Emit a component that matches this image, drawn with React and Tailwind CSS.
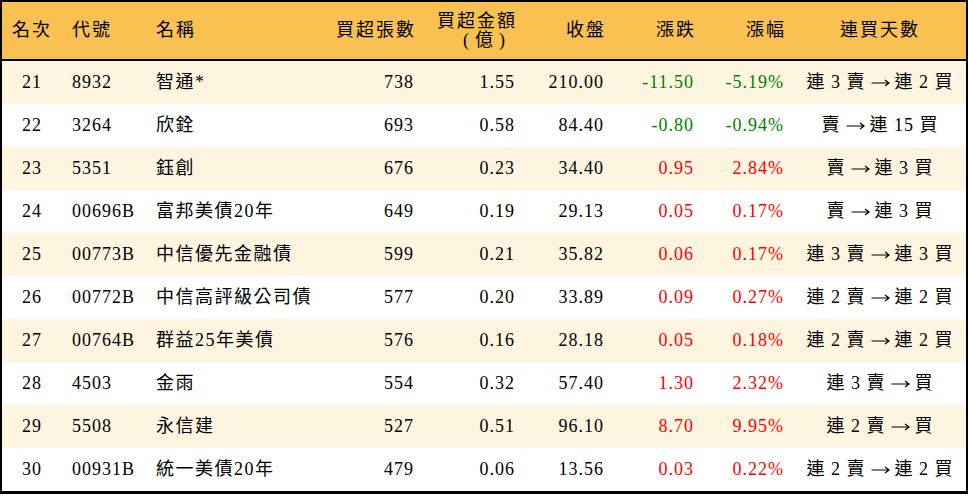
import React from 'react'

const rows = [
  { rank: 21, code: '8932', name: '智通*', vol: '738', amt: '1.55', close: '210.00', chg: '-11.50', pct: '-5.19%', from: '連 3 賣', to: '連 2 買' },
  { rank: 22, code: '3264', name: '欣銓', vol: '693', amt: '0.58', close: '84.40', chg: '-0.80', pct: '-0.94%', from: '賣', to: '連 15 買' },
  { rank: 23, code: '5351', name: '鈺創', vol: '676', amt: '0.23', close: '34.40', chg: '0.95', pct: '2.84%', from: '賣', to: '連 3 買' },
  { rank: 24, code: '00696B', name: '富邦美債20年', vol: '649', amt: '0.19', close: '29.13', chg: '0.05', pct: '0.17%', from: '賣', to: '連 3 買' },
  { rank: 25, code: '00773B', name: '中信優先金融債', vol: '599', amt: '0.21', close: '35.82', chg: '0.06', pct: '0.17%', from: '連 3 賣', to: '連 3 買' },
  { rank: 26, code: '00772B', name: '中信高評級公司債', vol: '577', amt: '0.20', close: '33.89', chg: '0.09', pct: '0.27%', from: '連 2 賣', to: '連 2 買' },
  { rank: 27, code: '00764B', name: '群益25年美債', vol: '576', amt: '0.16', close: '28.18', chg: '0.05', pct: '0.18%', from: '連 2 賣', to: '連 2 買' },
  { rank: 28, code: '4503', name: '金雨', vol: '554', amt: '0.32', close: '57.40', chg: '1.30', pct: '2.32%', from: '連 3 賣', to: '買' },
  { rank: 29, code: '5508', name: '永信建', vol: '527', amt: '0.51', close: '96.10', chg: '8.70', pct: '9.95%', from: '連 2 賣', to: '買' },
  { rank: 30, code: '00931B', name: '統一美債20年', vol: '479', amt: '0.06', close: '13.56', chg: '0.03', pct: '0.22%', from: '連 2 賣', to: '連 2 買' },
]

const cols = 'grid grid-cols-[60px_84px_178px_100px_101px_89px_90px_90px_172px]'

const Arrow = () => (
  <svg width="19" height="10" viewBox="0 0 19 10" className="inline-block align-middle mx-[5px] -mt-[1px]">
    <path d="M0.5 5H18M14 2L18 5L14 8" fill="none" stroke="black" strokeWidth="1.2" />
  </svg>
)

export default function App() {
  return (
    <div
      className="w-[968px] h-[496px] bg-white text-[18px] tracking-[1px] text-black"
      style={{ fontFamily: '"Liberation Serif", "Noto Sans CJK TC", serif' }}
    >
      <div className="border-2 border-b-[3px] border-black">
        {/* Header */}
        <div className={`${cols} h-[59px] items-center bg-[#f9c151] border-b-2 border-black tracking-[2px]`}>
          <div className="text-center">名次</div>
          <div className="pl-[10px]">代號</div>
          <div className="pl-[10px]">名稱</div>
          <div className="pr-[8px] text-right">買超張數</div>
          <div className="pr-[8px] text-right leading-[19px]">
            <div>買超金額</div>
            <div className="tracking-normal pr-[12px]">
              <span>(</span>
              <span className="mx-[6px]">億</span>
              <span>)</span>
            </div>
          </div>
          <div className="pr-[8px] text-right">收盤</div>
          <div className="pr-[8px] text-right">漲跌</div>
          <div className="pr-[8px] text-right">漲幅</div>
          <div className="text-center">連買天數</div>
        </div>

        {/* Rows */}
        {rows.map((r, i) => {
          const color = r.chg.startsWith('-') ? 'text-[#008000]' : 'text-[#ff0000]'
          return (
            <div
              key={r.rank}
              className={`${cols} h-[43px] items-center ${i % 2 === 0 ? 'bg-[#fef5e1]' : 'bg-white'}`}
            >
              <div className="text-center">{r.rank}</div>
              <div className="pl-[10px]">{r.code}</div>
              <div className="pl-[10px] whitespace-nowrap tracking-[1.5px]">{r.name}</div>
              <div className="pr-[10px] text-right">{r.vol}</div>
              <div className="pr-[10px] text-right">{r.amt}</div>
              <div className="pr-[10px] text-right">{r.close}</div>
              <div className={`pr-[10px] text-right ${color}`}>{r.chg}</div>
              <div className={`pr-[10px] text-right ${color}`}>{r.pct}</div>
              <div className="text-center whitespace-nowrap">
                {r.from}
                <Arrow />
                {r.to}
              </div>
            </div>
          )
        })}
      </div>
    </div>
  )
}
